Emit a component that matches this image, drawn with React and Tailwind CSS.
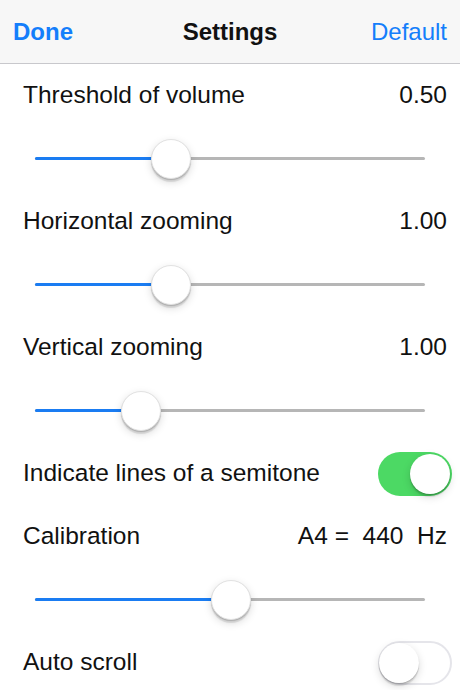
import { useState } from 'react';

const thumbShadow =
  'shadow-[0_3px_8px_rgba(0,0,0,0.15),0_1px_1px_rgba(0,0,0,0.16),0_3px_1px_rgba(0,0,0,0.1)]';

function LabelRow({ label, value }) {
  return (
    <div className="h-[63px] flex items-center justify-between pl-[23px] pr-[13px] text-[24.5px] text-[#111]">
      <span>{label}</span>
      <span className="whitespace-pre">{value}</span>
    </div>
  );
}

function Slider({ value }) {
  // thumb is 40px, track 390px wide -> thumb centre travels 350px
  const left = value * 350;
  return (
    <div className="h-[63px] flex items-center px-[35px]">
      <div className="relative w-full h-[3px] rounded-full bg-[#b6b6b6]">
        <div
          className="absolute left-0 top-0 h-[3px] rounded-full bg-[#1a7cf2]"
          style={{ width: left + 20 }}
        />
        <div
          className={`absolute top-1/2 -translate-y-1/2 w-10 h-10 rounded-full bg-white border border-[#e2e2e2] ${thumbShadow}`}
          style={{ left }}
        />
      </div>
    </div>
  );
}

function Toggle({ on, onChange }) {
  return (
    <button
      onClick={() => onChange(!on)}
      className={`relative w-[74px] h-[44px] rounded-full flex items-center ${
        on ? 'bg-[#4cd964] justify-end' : 'bg-white border-2 border-[#e5e5ea] justify-start'
      }`}
    >
      <span className={`block w-10 h-10 rounded-full bg-white ${on ? 'mr-[2px]' : '-ml-[1px]'} ${thumbShadow}`} />
    </button>
  );
}

function ToggleRow({ label, on, onChange }) {
  return (
    <div className="h-[63px] flex items-center justify-between pl-[23px] pr-[8px] text-[24.5px] text-[#111]">
      <span>{label}</span>
      <Toggle on={on} onChange={onChange} />
    </div>
  );
}

export default function App() {
  const [semitone, setSemitone] = useState(true);
  const [autoScroll, setAutoScroll] = useState(false);

  return (
    <div className="w-[460px] h-[690px] overflow-hidden bg-white font-['Liberation_Sans',Arial,sans-serif]">
      {/* Nav bar */}
      <header className="h-16 grid grid-cols-[1fr_auto_1fr] items-center px-[13px] bg-[#f7f7f7] border-b border-[#c8c8cc] text-[24px]">
        <span className="font-bold text-[#147efb]">Done</span>
        <span className="font-bold text-[#111]">Settings</span>
        <span className="justify-self-end text-[#147efb]">Default</span>
      </header>

      <LabelRow label="Threshold of volume" value="0.50" />
      <Slider value={0.33} />

      <LabelRow label="Horizontal zooming" value="1.00" />
      <Slider value={0.33} />

      <LabelRow label="Vertical zooming" value="1.00" />
      <Slider value={0.247} />

      <ToggleRow label="Indicate lines of a semitone" on={semitone} onChange={setSemitone} />

      <LabelRow label="Calibration" value="A4 =  440  Hz" />
      <Slider value={0.503} />

      <ToggleRow label="Auto scroll" on={autoScroll} onChange={setAutoScroll} />
    </div>
  );
}
